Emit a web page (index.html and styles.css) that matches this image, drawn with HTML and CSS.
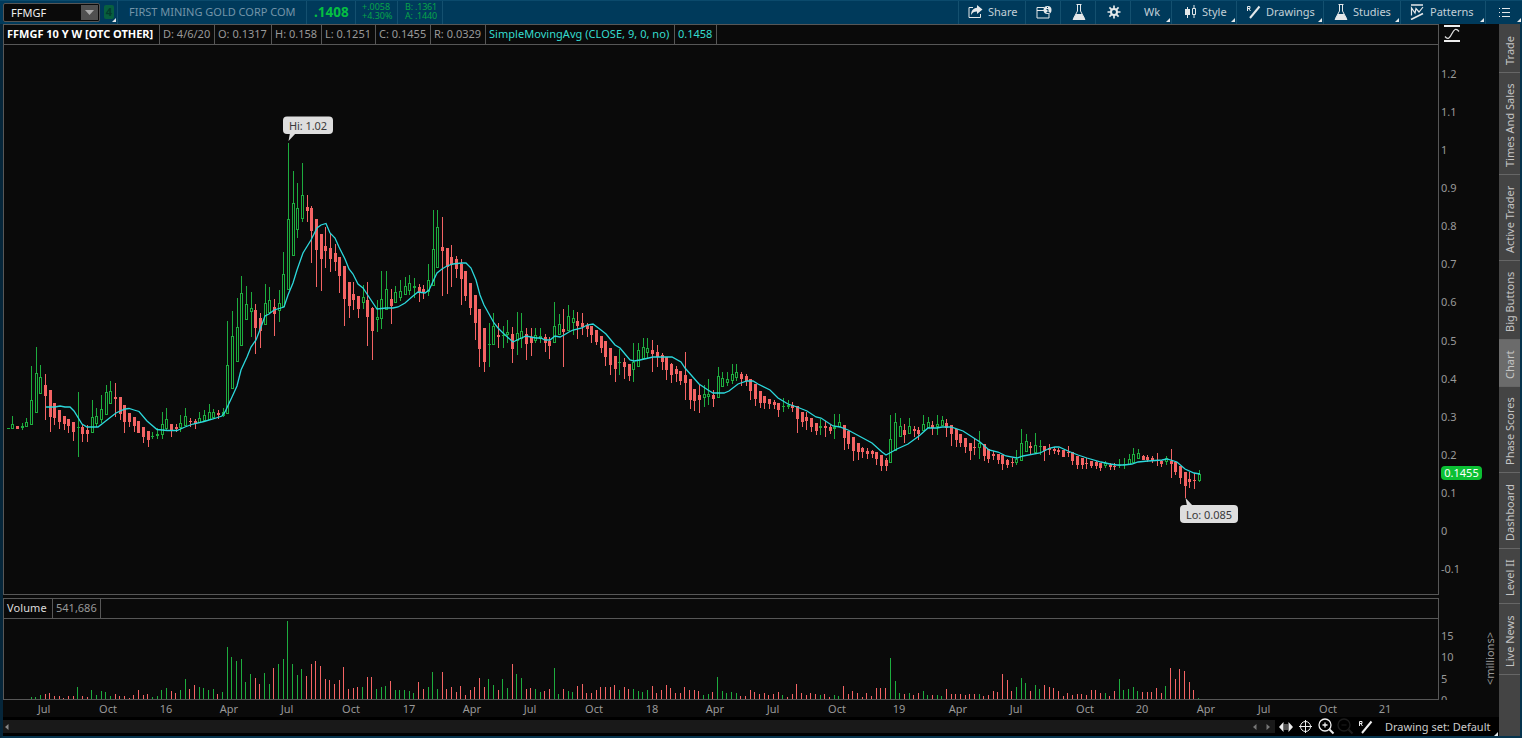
FILE: index.html
```html
<!DOCTYPE html>
<html lang="en">
<head>
    <meta charset="UTF-8">
    <meta name="viewport" content="width=device-width, initial-scale=1.0">
    <title>FFMGF Chart</title>
    <link rel="stylesheet" href="styles.css">
</head>
<body>

    <div class="toolbar">
        <div class="symbol-box">
            <span class="symbol">FFMGF</span>
            <span class="dropdown"><svg width="9" height="5"><path d="M0 0h9L4.500 5z" fill="#aaa"/></svg></span>
        </div>
        <div class="cell link-cell"><span class="link-badge">4</span></div>
        <div class="cell company">FIRST MINING GOLD CORP COM</div>
        <div class="cell last">.1408</div>
        <div class="cell change"><span>+.0058</span><span>+4.30%</span></div>
        <div class="cell bidask"><span>B: .1361</span><span>A: .1440</span></div>
        <div class="cell spacer"></div>

        <div class="cell btn share">
            <svg width="15" height="14" viewBox="0 0 15 14"><path d="M5 2.500H1v10h11.500V9" fill="none" stroke="#e4e8ea"/><path d="M9 0l5.500 4.500L9 9V6.500C6 6.500 4.500 7.500 3 10c0-4 2-7 6-7.300z" fill="#e4e8ea"/></svg>
            <span>Share</span>
        </div>
        <div class="cell btn info">
            <svg width="16" height="13" viewBox="0 0 16 13"><path d="M8 1.500H1v10.500h12V8M1 4.500h7" fill="none" stroke="#e4e8ea"/><circle cx="11.500" cy="4" r="4" fill="#e4e8ea"/><path d="M10.500 3.500h1.500v3M10.500 6.500h3M11 1.500h1" fill="none" stroke="#003a5b"/></svg>
        </div>
        <div class="cell btn lab">
            <svg class="flask" width="14" height="16" viewBox="0 0 14 16"><path d="M4.500 .500h5M5.500 1v6L1.500 14.500h11L8.500 7V1" fill="none" stroke="#e4e8ea"/><path d="M4 10h6l3.500 6H.500z" fill="#e4e8ea"/></svg>
        </div>
        <div class="cell btn gear">
            <svg width="14" height="14" viewBox="0 0 14 14"><g stroke="#e4e8ea" stroke-width="1.700"><path d="M7 .500v13M.500 7h13M2.400 2.400l9.200 9.200M11.600 2.400l-9.200 9.200"/></g><circle cx="7" cy="7" r="4" fill="#e4e8ea"/><circle cx="7" cy="7" r="2" fill="#003a5b"/></svg>
        </div>
        <div class="cell btn wk menu"><span>Wk</span></div>
        <div class="cell btn style menu">
            <svg width="12" height="14" viewBox="0 0 12 14"><path d="M0 4h5v6H0zM2 2h1v11H2z" fill="#e4e8ea"/><path d="M7.500 3.500h3v6h-3zM9 0v3M9 10v3" fill="none" stroke="#e4e8ea"/></svg>
            <span>Style</span>
        </div>
        <div class="cell btn drawings menu">
            <svg class="pen" width="14" height="14" viewBox="0 0 14 14"><path d="M.500 6V1.500h2.500v2H.500M2 4l1.500 2" fill="none" stroke="#e4e8ea"/><path d="M12.500 1.500L3 13" stroke="#e4e8ea" stroke-width="2"/></svg>
            <span>Drawings</span>
        </div>
        <div class="cell btn studies menu">
            <svg width="14" height="16" viewBox="0 0 14 16"><path d="M4.500 .500h5M5.500 1v6L1.500 14.500h11L8.500 7V1" fill="none" stroke="#e4e8ea"/><path d="M4 10h6l3.500 6H.500z" fill="#e4e8ea"/></svg>
            <span>Studies</span>
        </div>
        <div class="cell btn patterns menu">
            <svg width="14" height="16" viewBox="0 0 14 16"><path d="M1 1h12M1 15.500L13 9.500" stroke="#e4e8ea" stroke-width="1.700"/><path d="M1.500 11.500V4l3.500 5 1-4.500 3 3.500 4-5" fill="none" stroke="#e4e8ea" stroke-width="1.200"/></svg>
            <span>Patterns</span>
        </div>
        <div class="cell btn list menu">
            <svg width="11" height="10" viewBox="0 0 11 10" shape-rendering="crispEdges"><path d="M3 1.500h8M3 5.500h8M3 9.500h8M0 1.500h1M0 5.500h1M0 9.500h1" stroke="#e4e8ea"/></svg>
        </div>
    </div>

    <div class="main">
        <div class="charts">
            <div class="row price-row">
                <div class="panel">
                    <div class="legend price-legend">
                        <span class="title">FFMGF 10 Y W [OTC OTHER]</span>
                        <span class="c-d">D: 4/6/20</span>
                        <span class="c-o">O: 0.1317</span>
                        <span class="c-h">H: 0.158</span>
                        <span class="c-l">L: 0.1251</span>
                        <span class="c-c">C: 0.1455</span>
                        <span class="c-r">R: 0.0329</span>
                        <span class="sma c-sma">SimpleMovingAvg (CLOSE, 9, 0, no)</span>
                        <span class="sma c-val">0.1458</span>
                    </div>
                    <svg id="price" width="1434" height="549" viewBox="4 45 1434 549">
                        <g id="candles" shape-rendering="crispEdges"></g>
                        <polyline id="average" class="average"/>
                        <g class="callout">
                            <path d="M290 133L288.500 141L296 133z"/>
                            <rect x="283" y="116.500" width="50" height="17.500" rx="4"/>
                            <text x="289" y="130" textLength="38">Hi: 1.02</text>
                            <path d="M1187 506L1185.500 498L1193 506z"/>
                            <rect x="1180" y="505" width="58" height="18" rx="4"/>
                            <text x="1186" y="519" textLength="46">Lo: 0.085</text>
                        </g>
                    </svg>
                </div>
                <div class="axis price-axis">
                    <svg class="fit" width="16" height="17" viewBox="0 0 16 17"><path d="M0 1h16M0 16h16" stroke="#eee" stroke-width="2"/><path d="M1 11.500c3 4 5 1 7-3s4-6 7-2" fill="none" stroke="#ddd" stroke-width="1.300"/></svg>
                    <span>1.2</span><span>1.1</span><span>1</span><span>0.9</span><span>0.8</span><span>0.7</span><span>0.6</span>
                    <span>0.5</span><span>0.4</span><span>0.3</span><span>0.2</span><span>0.1</span><span>0</span><span>-0.1</span>
                    <b class="current">0.1455</b>
                </div>
            </div>

            <div class="row volume-row">
                <div class="panel">
                    <div class="legend">
                        <span class="vol-name">Volume</span>
                        <span class="vol-value">541,686</span>
                    </div>
                    <svg id="volume" width="1434" height="80" viewBox="4 619 1434 80" shape-rendering="crispEdges"></svg>
                </div>
                <div class="axis volume-axis">
                    <div class="ticks"><span>15</span><span>10</span><span>5</span><span>0</span></div>
                    <div class="unit">&lt;millions&gt;</div>
                </div>
            </div>

            <svg id="months" class="months" width="1496" height="17" viewBox="3 700 1496 17"></svg>

            <div class="footer">
                <div class="scroll">
                    <svg width="4" height="6"><path d="M3.500 0v6L0 3z" fill="#888"/></svg>
                    <span class="grow"></span>
                    <svg width="4" height="6"><path d="M3.500 0v6L0 3z" fill="#777"/></svg>
                    <svg class="next" width="4" height="6"><path d="M.500 0v6L4 3z" fill="#777"/></svg>
                </div>
                <div class="tools">
                    <svg width="14" height="10" viewBox="0 0 14 10"><path d="M4.500 0v10L0 5zM9.500 0v10L14 5z" fill="#eee"/><path d="M6 2v6M8 2v6" stroke="#aaa"/></svg>
                    <svg class="cross" width="13" height="13" viewBox="0 0 13 13"><circle cx="6.500" cy="6.500" r="5" fill="none" stroke="#eee"/><path d="M6.500 0v13M0 6.500h13" stroke="#eee"/></svg>
                    <svg class="zoom-in" width="17" height="17" viewBox="0 0 17 17"><circle cx="7" cy="7" r="6" fill="none" stroke="#eee" stroke-width="1.300"/><path d="M7 4.500v5M4.500 7h5" stroke="#eee" stroke-width="1.300"/><path d="M11.500 11.500l4 4" stroke="#eee" stroke-width="2"/></svg>
                    <svg class="zoom-out" width="17" height="17" viewBox="0 0 17 17"><circle cx="7" cy="7" r="6" fill="none" stroke="#1d1d1d" stroke-width="1.300"/><path d="M4.500 7h5" stroke="#1d1d1d"/><path d="M11.500 11.500l4 4" stroke="#1d1d1d" stroke-width="2"/></svg>
                    <svg class="draw" width="14" height="14" viewBox="0 0 14 14"><path d="M.500 6V1.500h2.500v2H.500M2 4l1.500 2" fill="none" stroke="#eee"/><path d="M12.500 1.500L3 13" stroke="#eee" stroke-width="2"/></svg>
                    <span class="set menu">Drawing set: Default</span>
                </div>
            </div>
        </div>

        <div class="tabs">
            <div class="tab t1">Trade</div>
            <div class="tab t2">Times And Sales</div>
            <div class="tab t3">Active Trader</div>
            <div class="tab t4">Big Buttons</div>
            <div class="tab t5 active">Chart</div>
            <div class="tab t6">Phase Scores</div>
            <div class="tab t7">Dashboard</div>
            <div class="tab t8">Level II</div>
            <div class="tab t9">Live News</div>
        </div>
    </div>

    <script src="chart.js"></script>
</body>
</html>
```
FILE: styles.css
```css
* {
    box-sizing: border-box;
}
body {
    margin: 0;
    width: 1522px;
    height: 738px;
    overflow: hidden;
    display: flex;
    flex-direction: column;
    background: #0a0a0a;
    color: #999;
    font-family: "Noto Sans", "Open Sans", sans-serif;
    font-size: 11px;
    line-height: 14px;
}
svg {
    display: block;
    flex: none;
}

/* toolbar */
.toolbar {
    height: 24px;
    flex: none;
    display: flex;
    background: #003a5b;
    padding-left: 3px;
    border-top: 1px solid #0b4a6c;
}
.symbol-box {
    width: 97px;
    height: 19px;
    margin-top: 2px;
    border: 1px solid #555;
    border-radius: 2px;
    background: #0a0a0a;
    display: flex;
    align-items: center;
    justify-content: space-between;
    padding-left: 7px;
    color: #eee;
}
.dropdown {
    width: 17px;
    height: 15px;
    margin-right: 1px;
    background: #505050;
    display: flex;
    align-items: center;
    justify-content: center;
}
.cell {
    border-right: 1px solid #14506f;
    display: flex;
    align-items: center;
    position: relative;
    white-space: nowrap;
    padding-bottom: 1px;
}
.link-cell {
    width: 18px;
    padding-left: 4px;
}
.link-badge {
    width: 10px;
    height: 14px;
    background: #08603f;
    color: #043c2e;
    font-weight: bold;
    text-align: center;
    border-radius: 2px;
}
.company {
    width: 189px;
    padding-left: 11px;
    color: #7394a8;
}
.last {
    width: 49px;
    padding-left: 7px;
    color: #05bf42;
    font-size: 13.5px;
    font-weight: bold;
}
.change, .bidask {
    flex-direction: column;
    align-items: flex-start;
    justify-content: center;
    font-size: 9px;
    line-height: 9px;
    color: #08a34a;
    padding-bottom: 3px;
}
.change {
    width: 42px;
    padding-left: 6px;
}
.bidask {
    width: 45px;
    padding-left: 7px;
    letter-spacing: -0.2px;
}
.spacer {
    width: 516px;
}
.btn {
    color: #c3d0d8;
}
.share {
    width: 67px;
    padding-left: 9px;
    gap: 5px;
}
.info {
    width: 35px;
    padding-left: 10px;
}
.lab {
    width: 35px;
    padding-left: 11px;
}
.gear {
    width: 35px;
    padding-left: 11px;
}
.wk {
    width: 41px;
    padding-left: 13px;
}
.style {
    width: 65px;
    padding-left: 13px;
    gap: 5px;
}
.drawings {
    width: 87px;
    padding-left: 10px;
    gap: 5px;
}
.studies {
    width: 77px;
    padding-left: 10px;
    gap: 5px;
}
.patterns {
    width: 85px;
    padding-left: 9px;
    gap: 6px;
}
.list {
    width: 36px;
    padding-left: 13px;
    border-right: none;
}
.menu::after, .link-cell::after {
    content: "";
    position: absolute;
    right: 1px;
    bottom: 2px;
    border-left: 4px solid transparent;
    border-bottom: 4px solid #e4e8ea;
}

/* charts */
.main {
    flex: 1;
    display: flex;
    border-left: 3px solid #06263a;
    border-right: 2px solid #06344e;
    border-bottom: 2px solid #06344e;
}
.charts {
    width: 1496px;
    display: flex;
    flex-direction: column;
}
.row {
    display: flex;
}
.price-row {
    height: 571px;
}
.volume-row {
    height: 102px;
    margin-top: 3px;
}
.panel {
    width: 1436px;
    border: 1px solid #575757;
}
.legend {
    height: 20px;
    display: flex;
    border-bottom: 1px solid #575757;
}
.legend span {
    border-right: 1px solid #575757;
    padding-left: 3px;
    line-height: 18px;
    white-space: nowrap;
}
.legend .title {
    width: 156px;
    color: #fff;
    font-weight: bold;
}
.c-d { width: 55px; }
.c-o { width: 57px; }
.c-h { width: 50px; }
.c-l { width: 54px; }
.c-c { width: 55px; }
.c-r { width: 55px; }
.c-sma { width: 189px; }
.c-val { width: 42px; }
.legend .sma {
    color: #35dccf;
}
.c-sma {
    letter-spacing: 0.04px;
}
.legend .vol-name {
    width: 49px;
    color: #ddd;
    letter-spacing: 0.1px;
}
.vol-value {
    width: 48px;
}
.average {
    fill: none;
    stroke: #2cd8dc;
    stroke-width: 1.3;
}
.callout {
    fill: #dedede;
}
.callout text {
    fill: #3a3a3a;
}
.axis {
    width: 60px;
    position: relative;
}
.price-axis span {
    display: block;
    height: 38.08px;
    line-height: 38px;
    padding-left: 2px;
}
.fit {
    margin: 1px 0 13px 5px;
}
.current {
    position: absolute;
    left: 2px;
    top: 442px;
    width: 41px;
    height: 14px;
    border-radius: 4px;
    background: #0cc034;
    color: #fff;
    font-weight: normal;
    text-align: center;
}
.volume-axis {
    display: flex;
    justify-content: space-between;
    overflow: hidden;
    padding-top: 27px;
}
.ticks span {
    display: block;
    height: 21.4px;
    line-height: 21px;
    padding-left: 2px;
}
.unit {
    writing-mode: vertical-rl;
    transform: rotate(180deg);
    height: 68px;
    width: 18px;
    text-align: center;
    line-height: 18px;
}
.months {
    fill: #999;
    text-anchor: middle;
}
.footer {
    flex: 1;
    display: flex;
    background: #000;
    padding-top: 3px;
}
.scroll {
    width: 1272px;
    height: 13px;
    background: #191919;
    display: flex;
    align-items: center;
    padding: 0 5px 0 2px;
}
.grow {
    flex: 1;
}
.next {
    margin-left: 9px;
}
.tools {
    flex: 1;
    height: 13px;
    display: flex;
    align-items: center;
    padding-left: 4px;
}
.cross { margin-left: 6px; }
.zoom-in { margin-left: 6px; }
.zoom-out { margin-left: 2px; }
.draw { margin-left: 5px; }
.set {
    position: relative;
    margin-left: 12px;
    flex: 1;
    color: #ccc;
}
.set::after {
    bottom: -2px;
}

/* side tabs */
.tabs {
    width: 21px;
    background: #444;
}
.tab {
    writing-mode: vertical-rl;
    transform: rotate(180deg);
    width: 21px;
    line-height: 21px;
    text-align: center;
    color: #c4c4c4;
    border-top: 1px solid #666;
    padding-bottom: 4px;
}
.tab.active {
    background: #6b6b6b;
}
.t1 { height: 49px; }
.t2 { height: 102px; }
.t3 { height: 86px; }
.t4 { height: 79px; }
.t5 { height: 47px; }
.t6 { height: 86px; }
.t7 { height: 76px; }
.t8 { height: 55px; }
.t9 { height: 71px; }
```
FILE: chart.js
```js
const UP = '#1dac3e';
const DOWN = '#f46464';
const STEP = 4.67;

// one entry per week: direction, high / body top / body bottom / low
const candles = `
g428/428/429/429 g416/424/429/429 r426/426/429/429 g423/426/428/430 g418/422/427/427 g366/400/425/425 g347/373/413/413 g365/377/394/394
r374/385/396/420 r390/390/417/432 r403/403/418/425 r410/410/422/429 r416/416/424/430 r419/419/426/433 r422/422/432/441 g392/427/428/457
r424/427/434/442 r425/430/434/442 g400/417/433/433 g408/416/424/427 g395/409/420/423 g385/392/415/415 g381/391/404/404 r383/397/399/417
r397/397/414/420 r405/405/422/433 r413/413/422/427 r417/417/426/432 r421/421/433/433 r427/427/437/443 r431/431/440/447 g432/436/437/439
g428/434/436/439 g412/424/435/439 g408/419/429/430 r424/424/431/437 r424/427/429/432 g415/423/428/432 g408/416/426/426 r418/421/422/427
r419/421/424/429 g412/418/423/423 g410/415/421/421 g404/412/420/420 g409/412/418/419 r410/413/415/419 g408/412/416/417 g321/365/414/414
g311/336/389/389 g298/327/362/362 g276/293/346/346 g286/304/320/320 g292/308/312/337 r304/310/328/354 r313/318/331/348 g284/303/325/325
g287/300/313/313 r299/307/314/336 g290/303/311/322 g252/274/307/307 g143/219/290/290 g171/203/256/256 g183/208/230/238 g163/195/219/222
r195/207/211/222 r206/208/231/263 r219/219/250/287 r234/234/259/291 r227/246/251/268 r234/248/259/272 r244/253/262/271 r257/257/276/293
r266/266/299/326 r282/282/306/318 r282/294/300/310 r296/296/309/318 g285/297/303/309 r282/300/317/346 r307/308/331/360 g300/317/320/332
g271/299/319/329 g271/289/310/310 r289/299/306/324 g286/292/303/303 g280/291/298/301 g277/286/295/295 g275/283/291/295 g278/286/288/298
r284/287/293/302 r285/289/292/299 g264/280/292/296 g210/249/286/286 g210/227/268/268 r217/247/251/296 r248/248/267/294 r245/257/265/287
r256/259/269/278 r259/264/279/305 r271/271/296/301 r283/283/308/315 r295/295/323/340 r309/309/349/367 r328/328/362/372 g323/344/345/367
g313/326/345/345 r323/335/337/348 g326/335/336/348 g320/332/335/343 r327/334/349/363 g312/333/341/355 g313/331/339/348 r328/334/344/360
r328/337/343/356 g328/335/341/343 g328/336/339/343 r334/337/343/352 r337/341/346/359 g302/326/343/343 g314/324/335/335 r309/329/332/367
g305/316/331/331 g310/318/323/335 r312/321/326/339 r313/323/327/335 r323/325/329/337 r326/326/335/343 r330/330/342/345 r336/336/348/353
r341/341/357/366 r348/348/365/375 r356/356/369/382 g349/362/363/375 r358/362/367/379 r364/364/376/381 g343/362/370/382 g343/350/367/367
g338/347/359/359 g338/348/353/359 r340/350/354/372 r345/352/357/367 r353/355/362/370 r357/357/370/380 r363/364/375/383 r366/369/374/382
r371/371/381/385 r352/375/383/400 r379/379/400/409 r389/389/401/411 r384/395/400/413 g385/394/398/407 g379/394/397/405 r390/395/399/407
g367/376/398/398 g372/378/387/387 g372/379/383/386 g364/374/381/384 g364/372/378/381 r372/374/379/386 r374/376/381/386 r379/379/391/400
r384/384/399/406 r391/391/403/408 r396/396/403/409 r399/399/404/409 r400/402/405/409 r403/403/410/417 g398/406/407/412 g400/405/407/409
r402/405/408/412 r406/406/419/433 r412/412/422/427 r412/417/421/430 r418/418/427/432 r423/423/431/435 g419/426/428/435 r421/426/428/437
r425/427/431/434 g414/427/429/439 g414/422/427/427 r425/425/438/450 r431/431/444/449 r437/437/451/461 r443/443/452/460 r447/448/452/458
r448/451/454/459 r450/451/454/458 r452/452/459/465 r455/455/466/471 r458/460/466/471 g415/439/463/463 g413/422/451/451 g418/426/437/437
r424/430/435/443 g418/426/434/434 r426/429/431/437 r427/430/434/440 g415/424/431/431 g417/422/428/428 r421/425/428/435 g415/424/427/435
g416/420/426/426 r419/423/428/437 r425/425/434/446 r429/429/440/447 r434/434/443/447 r438/438/447/453 r443/443/451/460 r438/447/448/455
g431/443/448/459 r444/444/456/461 r449/449/459/463 r451/454/456/460 r454/454/460/464 r455/455/464/470 r459/460/465/468 r458/462/463/467
g450/459/463/465 g429/443/461/461 g434/441/452/452 r442/446/448/454 g433/445/453/453 g440/446/447/455 r446/446/451/461 r444/448/450/455
r447/449/451/454 r448/450/452/455 r450/450/457/457 r446/452/453/457 r452/452/461/465 r456/456/465/469 r458/458/465/469 r458/463/464/469
r461/461/466/468 r461/462/466/469 r463/463/468/471 g461/463/466/468 r463/465/467/470 r463/466/467/470 g459/465/466/468 g458/464/465/469
g454/459/465/465 g448/454/463/463 g449/453/459/459 r455/456/460/460 r455/457/460/462 r456/458/460/463 r453/460/461/466 r460/461/464/467
g456/458/462/465 r449/461/464/478 r462/462/472/475 r466/466/478/484 r472/472/486/498 r472/479/482/488 r473/480/481/489 g470/474/481/482
`;

const average = `
46,407 55,407 60,406 65,407 70,407 74,411 82,424 87,427 98,427 107,420 116,413 125,409 129,408.5 134,410 139,411.5 147,421 157,429.5
167,430.5 177,430.5 185,427 193,424 204,421.5 213,419 222,416 225,412 232,397 237,386 241,370 247,357 251,347 256,340 261,327 265,316
269,314 274,310 284,307 288,295 293,283 297,270 303,253 311,240 317,228 321,225 326,223.5 330,233 335,238 339,247 345,259 349,269 353,274
358,284 363,288 367,294 377,309 386,308 393,308 398,307 405,303 413,296 418,292 425,293 429,290 437,273 442,269 447,266 453,264 462,263
466,263 471,268 476,280 480,295 484,305 489,314 494,323 498,328 503,333 513,342 517,340 526,336 536,338 541,338 545,340 550,340 555,336
560,337 564,335 569,332 573,330 582,328 587,325 593,324 597,327 601,330 606,334 615,345 620,348 625,354 630,360 634,361 640,360 653,357
672,357 681,362 685,368 699,384 708,390 713,393 724,393 729,391 738,384 747,381 753,381 758,384 770,390 778,398 788,404 797,407 807,411
816,417 821,418 833,426 840,427 848,430 872,443 882,452 886,455 897,449 908,444 919,436 928,428 937,428 942,427 951,427 963,431 980,442
989,450 998,452 1006,456 1017,458 1023,456 1040,453 1050,448 1055,447 1059,447 1068,451 1078,455 1087,458 1101,462 1110,464 1117,465
1124,465 1132,464 1138,462 1148,461 1162,460 1167,459 1177,462 1185,469 1194,473 1200,474
`;

// direction and bar height, starting with the sixth week
const volumes = `
g2 g2 g4 r5 r6 r3 r3 r1 r3 r3 g12 r3 r2 g9 g4 g8 g7 g3 r5 r3 r3 r1 r4 r9 r4 r5 g2 g3 g9 g11 r8 r6 g9 g20 r10 r14 g12 g11 g9 g10 r5 g7
g52 g42 g38 g40 g17 g25 r21 r15 g26 g15 r31 g35 g40 g78 g35 g24 g30 r23 r35 r38 r33 r20 r19 r15 r19 r32 r10 r11 r12 g12 r22 r22 g10 g12
g13 r18 g9 g9 g9 g8 g6 r17 r10 g12 g27 g10 r27 r10 r12 r7 r13 r4 r9 r12 r21 r12 g20 g14 r9 g20 g11 r35 g25 g21 r10 r11 g10 g7 r8 r10 g31
g5 r10 g8 g7 r13 r15 r6 r6 r9 r12 r12 r12 r14 g9
r12 r10 g10 g8 g7 g9 r13 r6 r9 r14 r11 r6 r6 r12 r9 r9 r8 g4 g5 r7 g22 g8 g6 g7 g6 r3 r3 r9 r7 r5 r6 r4 r5 r7 g4 r2 r5 r15 r6 r4 r6 r5 g4
r5 r2 g4 g3 r13 r5 r8 r6 r2 r6 r3 r11 r11 r11 g41 g18 g6 r5 g6 r4 r6 g8 g4 r4 g4 g3 r10 r5 r5 r5 r4 r5 r5 g5 r3 r4 r8 r7 r25 r19 r8 g12
g21 g16 r8 g14 g10 r14 r12 r11 r8 r3 r6 r4 r5 r5 r4 r9 r9 r6 g6 r3 r8 g20 g9 g10 g12 g8 r7 r7 r7 r11 r6 g13 r31 r20 r30 r28 r17 r9 g1
`;

const months = [
    [44, 'Jul'], [108, 'Oct'], [166, '16'], [229, 'Apr'], [287, 'Jul'], [351, 'Oct'], [409, '17'], [472, 'Apr'],
    [530, 'Jul'], [594, 'Oct'], [652, '18'], [715, 'Apr'], [773, 'Jul'], [837, 'Oct'], [899, '19'], [958, 'Apr'],
    [1016, 'Jul'], [1085, 'Oct'], [1142, '20'], [1206, 'Apr'], [1264, 'Jul'], [1328, 'Oct'], [1385, '21']
];

function rect(x, y, w, h, color) {
    return `<rect x="${x}" y="${y}" width="${w}" height="${h}" fill="${color}"/>`;
}

let out = '';
candles.trim().split(/\s+/).forEach((c, i) => {
    const color = c[0] === 'g' ? UP : DOWN;
    const [high, top, bottom, low] = c.slice(1).split('/').map(Number);
    const x = Math.floor(8.2 + i * STEP);
    out += rect(x, high, 1, low - high, color);
    out += rect(x - 1, top, 3, Math.max(bottom - top, 1), color);
    if (c[0] === 'g' && bottom - top > 2) {
        out += rect(x, top + 1, 1, bottom - top - 2, '#0a0a0a');
    }
});
document.getElementById('candles').innerHTML = out;
document.getElementById('average').setAttribute('points', average.trim());

out = '';
volumes.trim().split(/\s+/).forEach((v, i) => {
    const h = Number(v.slice(1));
    out += rect(Math.floor(7.7 + (i + 5) * STEP), 699 - h, 1, h, v[0] === 'g' ? UP : DOWN);
});
document.getElementById('volume').innerHTML = out;

document.getElementById('months').innerHTML = months.map(m => `<text x="${m[0]}" y="713">${m[1]}</text>`).join('');
```
